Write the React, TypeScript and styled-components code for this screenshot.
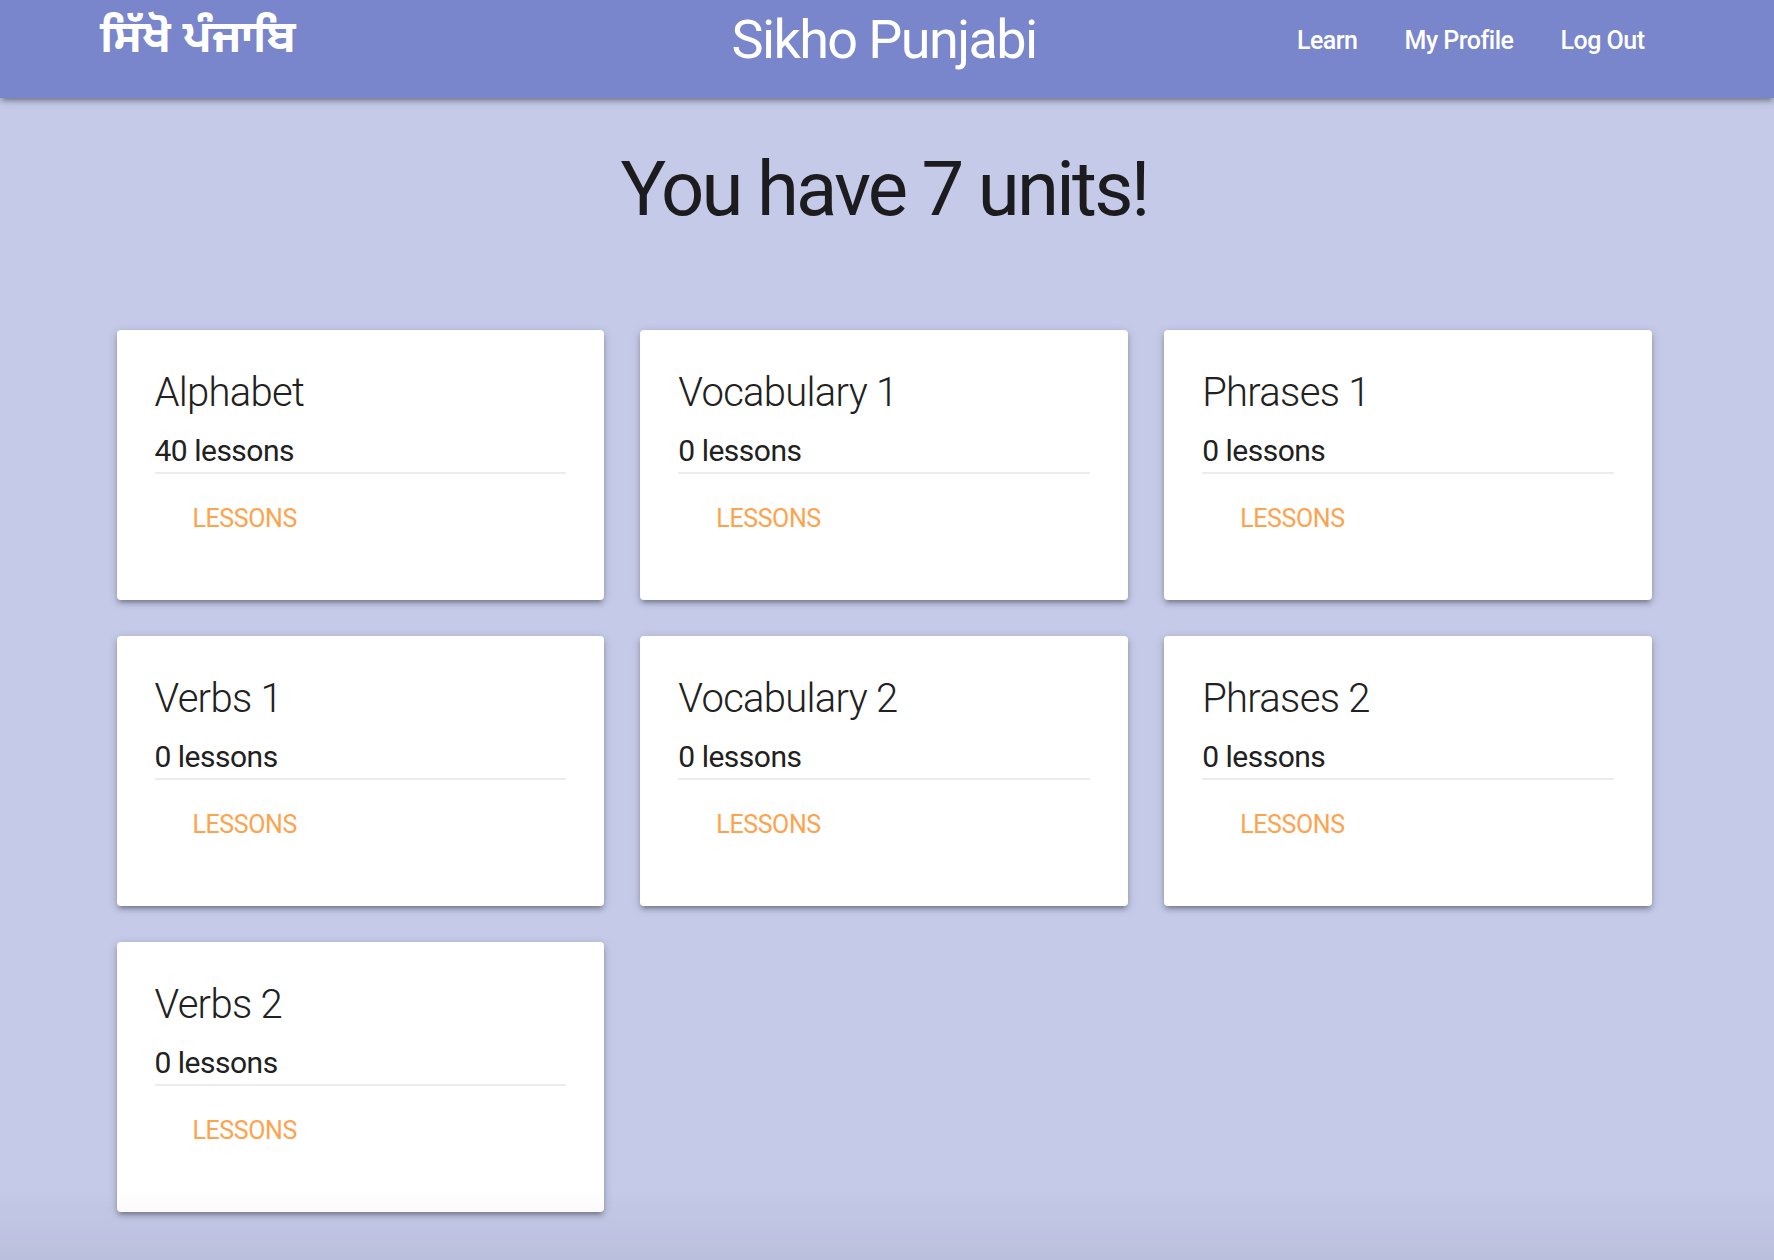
import React from 'react'
import styled, { createGlobalStyle } from 'styled-components'

const GlobalStyle = createGlobalStyle`
  html, body {
    margin: 0;
    padding: 0;
    background: #c5cae9;
    font-family: Roboto, 'Liberation Sans', sans-serif;
    color: rgba(0, 0, 0, 0.87);
  }
`

const units = [
  { title: 'Alphabet', lessons: 40 },
  { title: 'Vocabulary 1', lessons: 0 },
  { title: 'Phrases 1', lessons: 0 },
  { title: 'Verbs 1', lessons: 0 },
  { title: 'Vocabulary 2', lessons: 0 },
  { title: 'Phrases 2', lessons: 0 },
  { title: 'Verbs 2', lessons: 0 }
]

const Page = styled.div`
  min-height: 1260px;
  padding-bottom: 48px;
  box-sizing: border-box;
`

const Header = styled.header`
  position: relative;
  z-index: 2;
  height: 98px;
  background: #7986cb;
  box-shadow: 0 4px 4px 0 rgba(0, 0, 0, 0.14), 0 6px 2px -4px rgba(0, 0, 0, 0.12), 0 2px 10px 0 rgba(0, 0, 0, 0.2);
  padding: 0 106px 18px 100px;
  box-sizing: border-box;
  display: grid;
  grid-template-columns: 1fr auto 1fr;
  align-items: center;
  color: #fff;
`

const Logo = styled.a`
  justify-self: start;
  font-family: 'Noto Sans Gurmukhi', 'Lohit Gurmukhi', 'Noto Sans', sans-serif;
  font-size: 45px;
  font-weight: 700;
  line-height: 1;
  color: #fff;
  text-decoration: none;
  margin-top: 3px;
`

const Brand = styled.div`
  font-size: 54px;
  line-height: 1;
  letter-spacing: -1.6px;
  font-weight: 400;
`

const Nav = styled.nav`
  justify-self: end;
  display: flex;
  align-items: center;
`

const NavLink = styled.a`
  font-size: 25px;
  line-height: 1;
  font-weight: 500;
  letter-spacing: -0.5px;
  color: #fff;
  text-decoration: none;
  padding: 0 23.5px;
`

const Container = styled.main`
  width: 1535px;
  margin-left: 116.5px;
`

const Heading = styled.h1`
  margin: 53px 0 103px;
  text-align: center;
  font-size: 76px;
  line-height: 1;
  font-weight: 400;
  letter-spacing: -2.7px;
  color: #1c1c1f;
`

const Grid = styled.div`
  display: grid;
  grid-template-columns: repeat(3, 1fr);
  column-gap: 36.5px;
  row-gap: 36px;
`

const Card = styled.div`
  height: 270px;
  box-sizing: border-box;
  padding: 43px 38px 0;
  background: #fff;
  border-radius: 4px;
  box-shadow: 0 4px 4px 0 rgba(0, 0, 0, 0.14), 0 6px 2px -4px rgba(0, 0, 0, 0.12), 0 2px 10px 0 rgba(0, 0, 0, 0.2);
`

const CardTitle = styled.h2`
  margin: 0;
  font-size: 40px;
  line-height: 1;
  font-weight: 300;
  letter-spacing: -0.7px;
  color: #212121;
`

const Count = styled.p`
  margin: 23px 0 0;
  font-size: 30px;
  line-height: 1;
  letter-spacing: -0.5px;
  color: #212121;
  padding-bottom: 6px;
  border-bottom: 2px solid rgba(160, 160, 160, 0.2);
`

const Action = styled.a`
  display: inline-block;
  margin: 32px 0 0 38px;
  font-size: 25px;
  line-height: 1;
  letter-spacing: -0.4px;
  text-transform: uppercase;
  color: #ffa24c;
  text-decoration: none;
`

const BottomFade = styled.div`
  position: fixed;
  left: 0;
  right: 0;
  bottom: 0;
  height: 72px;
  pointer-events: none;
  background: linear-gradient(to bottom, rgba(0, 0, 0, 0), rgba(0, 0, 0, 0.05));
`

const App = () => {
  return (
    <Page>
      <GlobalStyle />
      <Header>
        <Logo href='#'>ਸਿੱਖੋ ਪੰਜਾਬਿ</Logo>
        <Brand>Sikho Punjabi</Brand>
        <Nav>
          <NavLink href='#'>Learn</NavLink>
          <NavLink href='#'>My Profile</NavLink>
          <NavLink href='#'>Log Out</NavLink>
        </Nav>
      </Header>
      <Container>
        <Heading>You have {units.length} units!</Heading>
        <Grid>
          {units.map((unit) => (
            <Card key={unit.title}>
              <CardTitle>{unit.title}</CardTitle>
              <Count>{unit.lessons} lessons</Count>
              <Action href='#'>Lessons</Action>
            </Card>
          ))}
        </Grid>
      </Container>
      <BottomFade />
    </Page>
  )
}

export default App
